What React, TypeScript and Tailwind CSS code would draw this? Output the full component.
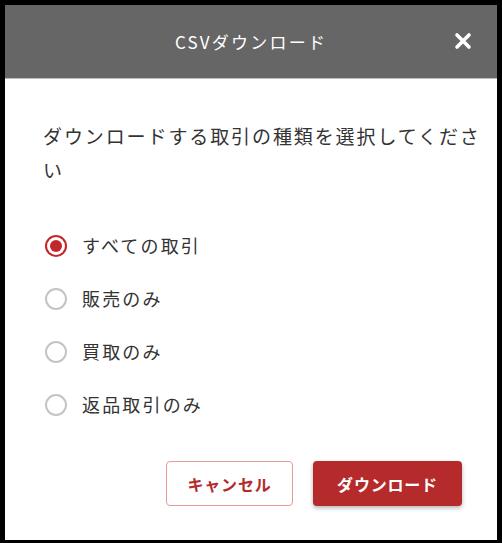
import React, { useState } from "react";

const options = ["すべての取引", "販売のみ", "買取のみ", "返品取引のみ"];

export default function App() {
  const [sel, setSel] = useState(0);
  return (
    <div
      className="w-[502px] h-[543px] bg-black p-[5px] pb-[3px]"
      style={{ fontFamily: '"Noto Sans CJK JP", "Noto Sans", sans-serif' }}
    >
      <div className="w-[492px] h-[535px] bg-white flex flex-col">
        <div className="h-[74px] bg-[#666666] border-b border-[#bdbdbd] relative flex items-center justify-center">
          <span className="text-white text-[17px] tracking-[0.13em]">CSVダウンロード</span>
          <button className="absolute right-[24px] top-[26px] w-[20px] h-[20px] flex items-center justify-center">
            <svg width="18" height="18" viewBox="0 0 18 18">
              <path d="M3 3 L15 15 M15 3 L3 15" stroke="white" strokeWidth="3.6" strokeLinecap="round" />
            </svg>
          </button>
        </div>
        <div className="pl-[38px] pr-[8px] pt-[40px]">
          <p className="text-[#333333] text-[19px] leading-[34px] tracking-[0.1em]">
            ダウンロードする取引の種類を選択してください
          </p>
          <div className="mt-[47px] flex flex-col gap-[30px]">
            {options.map((o, i) => (
              <label key={o} className="flex items-center h-[23px] cursor-pointer" onClick={() => setSel(i)}>
                <span
                  className={
                    "w-[22px] h-[22px] rounded-full border-2 flex items-center justify-center ml-[2px] " +
                    (sel === i ? "border-[#c0282d]" : "border-[#c4c4c4]")
                  }
                >
                  {sel === i && <span className="w-[12px] h-[12px] rounded-full bg-[#c0282d]" />}
                </span>
                <span className="ml-[15px] text-[#333333] text-[18px] tracking-[0.12em]">{o}</span>
              </label>
            ))}
          </div>
          <div className="mt-[45px] flex justify-end gap-[20px] pr-[27px]">
            <button className="w-[127px] h-[45px] rounded-[4px] border border-[#e69a9a] text-[#b52a2a] text-[16px] font-bold tracking-[0.05em]">
              キャンセル
            </button>
            <button className="w-[149px] h-[45px] rounded-[4px] bg-[#b52a2a] text-white text-[16px] font-bold tracking-[0.05em] shadow-[0_2px_4px_rgba(0,0,0,0.3)]">
              ダウンロード
            </button>
          </div>
        </div>
      </div>
    </div>
  );
}
